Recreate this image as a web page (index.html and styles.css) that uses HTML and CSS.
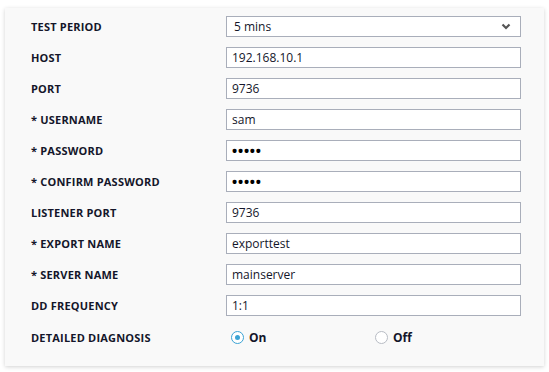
FILE: index.html
```html
<!DOCTYPE html>
<html lang="en">
<head>
  <meta charset="UTF-8" />
  <title>Monitor Settings</title>
  <link rel="stylesheet" href="styles.css">
</head>
<body>
  <div class="settings-panel">
    <div class="settings-row">
      <label class="settings-label">TEST PERIOD</label>
      <div class="select-box">
        <span>5 mins</span>
        <svg class="select-arrow" width="10" height="7" viewBox="0 0 10 7">
          <path d="M1.5 1.5 L5 5 L8.5 1.5" fill="none" stroke="#555" stroke-width="2.2"/>
        </svg>
      </div>
    </div>
    <div class="settings-row">
      <label class="settings-label">HOST</label>
      <input class="settings-input" type="text" value="192.168.10.1">
    </div>
    <div class="settings-row">
      <label class="settings-label">PORT</label>
      <input class="settings-input" type="text" value="9736">
    </div>
    <div class="settings-row">
      <label class="settings-label">* USERNAME</label>
      <input class="settings-input" type="text" value="sam">
    </div>
    <div class="settings-row">
      <label class="settings-label">* PASSWORD</label>
      <input class="settings-input password" type="password" value="abcde">
    </div>
    <div class="settings-row">
      <label class="settings-label">* CONFIRM PASSWORD</label>
      <input class="settings-input password" type="password" value="abcde">
    </div>
    <div class="settings-row">
      <label class="settings-label">LISTENER PORT</label>
      <input class="settings-input" type="text" value="9736">
    </div>
    <div class="settings-row">
      <label class="settings-label">* EXPORT NAME</label>
      <input class="settings-input" type="text" value="exporttest">
    </div>
    <div class="settings-row">
      <label class="settings-label">* SERVER NAME</label>
      <input class="settings-input" type="text" value="mainserver">
    </div>
    <div class="settings-row">
      <label class="settings-label">DD FREQUENCY</label>
      <input class="settings-input" type="text" value="1:1">
    </div>
    <div class="settings-row radio-row">
      <label class="settings-label">DETAILED DIAGNOSIS</label>
      <div class="radio-group">
        <div class="radio-option">
          <span class="radio checked"></span>
          <span>On</span>
        </div>
        <div class="radio-option">
          <span class="radio"></span>
          <span>Off</span>
        </div>
      </div>
    </div>
  </div>
</body>
</html>
```

FILE: styles.css
```css
* {
  margin: 0;
  padding: 0;
  box-sizing: border-box;
}

:root {
  --text: #14162a;
  --border: #a9aeba;
  --accent: #3ba3d4;
  --panel-bg: #f9f9f9;
}

body {
  background: #ffffff;
  font-family: "Open Sans", sans-serif;
  color: var(--text);
  padding: 8px 5px 6px 5px;
}

.settings-panel {
  width: 539px;
  height: 358px;
  background: var(--panel-bg);
  box-shadow: 0 1px 4px rgba(0, 0, 0, 0.18);
  padding: 8px 23px 0 26px;
  display: flex;
  flex-direction: column;
  gap: 10px;
}

.settings-row {
  display: flex;
  align-items: center;
  height: 21px;
}

.settings-label {
  width: 195px;
  flex-shrink: 0;
  font-size: 11px;
  font-weight: 700;
  letter-spacing: 0.2px;
}

.settings-input,
.select-box {
  width: 295px;
  height: 21px;
  border: 1px solid var(--border);
  background: #fff;
  font-family: "Open Sans", sans-serif;
  font-size: 12px;
  color: var(--text);
  padding: 0 5px;
  outline: none;
}

.password {
  font-size: 19px;
  letter-spacing: -1.2px;
  color: #000;
  padding-left: 4px;
}

.select-box {
  display: flex;
  align-items: center;
  justify-content: space-between;
  padding: 0 9px 0 7px;
}

.select-arrow {
  display: block;
}

.radio-row {
  margin-top: 1px;
}

.radio-group {
  display: flex;
  padding-left: 5px;
}

.radio-option {
  display: flex;
  align-items: center;
  gap: 5px;
  width: 144px;
  font-size: 12px;
  font-weight: 700;
}

.radio {
  width: 13px;
  height: 13px;
  border-radius: 50%;
  border: 1px solid #b8bcc4;
  background: #fff;
  display: flex;
  align-items: center;
  justify-content: center;
}

.radio.checked {
  border-color: var(--accent);
}

.radio.checked::after {
  content: "";
  width: 5px;
  height: 5px;
  border-radius: 50%;
  background: var(--accent);
}
```
